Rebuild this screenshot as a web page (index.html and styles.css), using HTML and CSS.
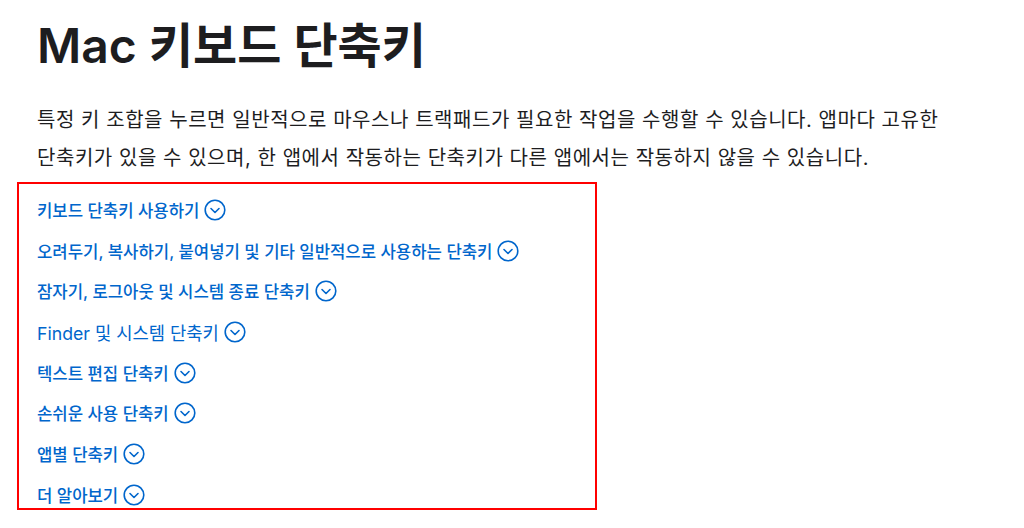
FILE: index.html
```html
<!DOCTYPE html>
<html lang="ko">
<head>
<meta charset="utf-8">
<title>Mac 키보드 단축키</title>
<link rel="stylesheet" href="styles.css">
</head>
<body>
<main class="page">
  <h1 class="title">Mac 키보드 단축키</h1>
  <p class="intro">특정 키 조합을 누르면 일반적으로 마우스나 트랙패드가 필요한 작업을 수행할 수 있습니다. 앱마다 고유한 단축키가 있을 수 있으며, 한 앱에서 작동하는 단축키가 다른 앱에서는 작동하지 않을 수 있습니다.</p>
  <ul class="toc">
    <li class="toc-item"><a class="toc-link" href="#use">키보드 단축키 사용하기<svg class="chev" viewBox="0 0 22 22"><circle cx="11" cy="11" r="9.8"/><path d="M7 9.5l4 4 4-4"/></svg></a></li>
    <li class="toc-item"><a class="toc-link" href="#common">오려두기, 복사하기, 붙여넣기 및 기타 일반적으로 사용하는 단축키<svg class="chev" viewBox="0 0 22 22"><circle cx="11" cy="11" r="9.8"/><path d="M7 9.5l4 4 4-4"/></svg></a></li>
    <li class="toc-item"><a class="toc-link" href="#sleep">잠자기, 로그아웃 및 시스템 종료 단축키<svg class="chev" viewBox="0 0 22 22"><circle cx="11" cy="11" r="9.8"/><path d="M7 9.5l4 4 4-4"/></svg></a></li>
    <li class="toc-item toc-item--large"><a class="toc-link" href="#finder">Finder 및 시스템 단축키<svg class="chev" viewBox="0 0 22 22"><circle cx="11" cy="11" r="9.8"/><path d="M7 9.5l4 4 4-4"/></svg></a></li>
    <li class="toc-item"><a class="toc-link" href="#text">텍스트 편집 단축키<svg class="chev" viewBox="0 0 22 22"><circle cx="11" cy="11" r="9.8"/><path d="M7 9.5l4 4 4-4"/></svg></a></li>
    <li class="toc-item"><a class="toc-link" href="#access">손쉬운 사용 단축키<svg class="chev" viewBox="0 0 22 22"><circle cx="11" cy="11" r="9.8"/><path d="M7 9.5l4 4 4-4"/></svg></a></li>
    <li class="toc-item"><a class="toc-link" href="#apps">앱별 단축키<svg class="chev" viewBox="0 0 22 22"><circle cx="11" cy="11" r="9.8"/><path d="M7 9.5l4 4 4-4"/></svg></a></li>
    <li class="toc-item"><a class="toc-link" href="#more">더 알아보기<svg class="chev" viewBox="0 0 22 22"><circle cx="11" cy="11" r="9.8"/><path d="M7 9.5l4 4 4-4"/></svg></a></li>
  </ul>
</main>
</body>
</html>
```

FILE: styles.css
```css
html, body {
  margin: 0;
  padding: 0;
  background: #ffffff;
}

body {
  font-family: Inter, "Noto Sans CJK KR", sans-serif;
  color: #1d1d1f;
}

.page {
  padding: 18px 0 0 37px;
  width: 960px;
}

.title {
  margin: 0;
  font-size: 48px;
  line-height: 56px;
  font-weight: 600;
  letter-spacing: 0;
}

.intro {
  margin: 27px 0 0;
  font-size: 20px;
  line-height: 38px;
  font-weight: 400;
  letter-spacing: 0.55px;
  width: 920px;
}

.toc {
  list-style: none;
  margin: 5px 0 0 -20px;
  padding: 14px 18px 1px 18px;
  width: 540px;
  border: 2px solid #ff0000;
  display: flex;
  flex-direction: column;
  gap: 16.7px;
}

.toc-item {
  height: 24px;
  display: flex;
  align-items: center;
  font-size: 16.7px;
  font-weight: 500;
}

.toc-item--large {
  font-size: 17.7px;
  font-weight: 400;
}

.toc-link {
  color: #0066cc;
  text-decoration: none;
  display: inline-flex;
  align-items: center;
  gap: 5px;
}

.chev {
  width: 22px;
  height: 22px;
  fill: none;
  stroke: #0066cc;
  stroke-width: 1.6;
  stroke-linecap: round;
  stroke-linejoin: round;
}
```
